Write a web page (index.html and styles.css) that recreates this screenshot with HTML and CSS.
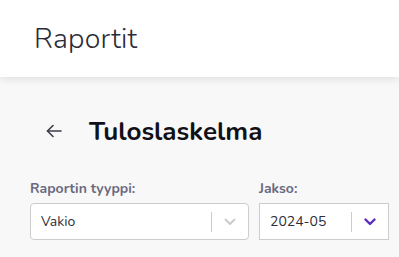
FILE: index.html
```html
<!doctype html>
<html lang="fi">
  <head>
    <meta charset="UTF-8" />
    <meta name="viewport" content="width=device-width, initial-scale=1.0" />
    <title>Raportit</title>
    <link rel="stylesheet" href="styles.css">
  </head>
  <body>
    <header class="topbar">
      <h1>Raportit</h1>
    </header>
    <main class="content">
      <div class="title-row">
        <a href="#" class="back-link" aria-label="Takaisin">
          <svg width="16" height="14" viewBox="0 0 16 14" fill="none" stroke="currentColor" stroke-width="1.6" stroke-linecap="round" stroke-linejoin="round">
            <path d="M15 7H1.5" />
            <path d="M7 1.5L1.5 7L7 12.5" />
          </svg>
        </a>
        <h2>Tuloslaskelma</h2>
      </div>
      <div class="filters">
        <div class="field">
          <label>Raportin tyyppi:</label>
          <div class="select rounded">
            <span class="value">Vakio</span>
            <span class="divider"></span>
            <span class="chevron muted">
              <svg width="12" height="8" viewBox="0 0 12 8" fill="none" stroke="currentColor" stroke-width="2" stroke-linecap="round" stroke-linejoin="round">
                <path d="M1.5 1.5L6 6L10.5 1.5" />
              </svg>
            </span>
          </div>
        </div>
        <div class="field">
          <label>Jakso:</label>
          <div class="select">
            <span class="value">2024-05</span>
            <span class="divider"></span>
            <span class="chevron accent">
              <svg width="12" height="8" viewBox="0 0 12 8" fill="none" stroke="currentColor" stroke-width="2.4" stroke-linecap="round" stroke-linejoin="round">
                <path d="M1.5 1.5L6 6L10.5 1.5" />
              </svg>
            </span>
          </div>
        </div>
      </div>
    </main>
  </body>
</html>
```

FILE: styles.css
```css
body {
  font-family: "Nunito", "Lato", "Open Sans", sans-serif;
  margin: 0;
  background-color: #f8f8f8;
  color: #2b2b38;
  height: 257px;
  overflow: hidden;
}

.topbar {
  height: 77px;
  background-color: white;
  box-shadow: 0 2px 8px rgba(0, 0, 0, 0.1);
  display: flex;
  align-items: center;
  padding-left: 34px;
  position: relative;
}

.topbar h1 {
  margin: 0;
  font-size: 28.5px;
  font-weight: 300;
  color: #2b2b38;
  letter-spacing: 0.2px;
}

.content {
  padding: 40px 10px 0 30px;
}

.title-row {
  display: flex;
  align-items: center;
  height: 28px;
  padding-left: 16px;
}

.back-link {
  color: #3c3c48;
  display: flex;
  align-items: center;
  margin-right: 27px;
}

.title-row h2 {
  margin: 0;
  font-size: 26px;
  font-weight: 700;
  color: #111118;
}

.filters {
  display: flex;
  gap: 10px;
  margin-top: 36px;
}

.field {
  display: flex;
  flex-direction: column;
  flex-shrink: 0;
}

.field:first-child {
  width: 219px;
}

.field:last-child {
  width: 130px;
}

label {
  font-size: 14px;
  font-weight: 700;
  color: #6a6a7e;
  margin-bottom: 6px;
  height: 16px;
  line-height: 16px;
}

.select {
  height: 37px;
  box-sizing: border-box;
  border: 1px solid #cccccc;
  background-color: white;
  display: flex;
  align-items: center;
  padding-left: 10px;
}

.select.rounded {
  border-radius: 4px;
}

.value {
  flex: 1;
  font-size: 14px;
  color: #2e2e3a;
}

.divider {
  width: 1px;
  height: 20px;
  background-color: #cccccc;
}

.chevron {
  width: 36px;
  display: flex;
  justify-content: center;
  align-items: center;
}

.chevron.muted {
  color: #cccccc;
}

.chevron.accent {
  color: #5a2ec2;
}
```
